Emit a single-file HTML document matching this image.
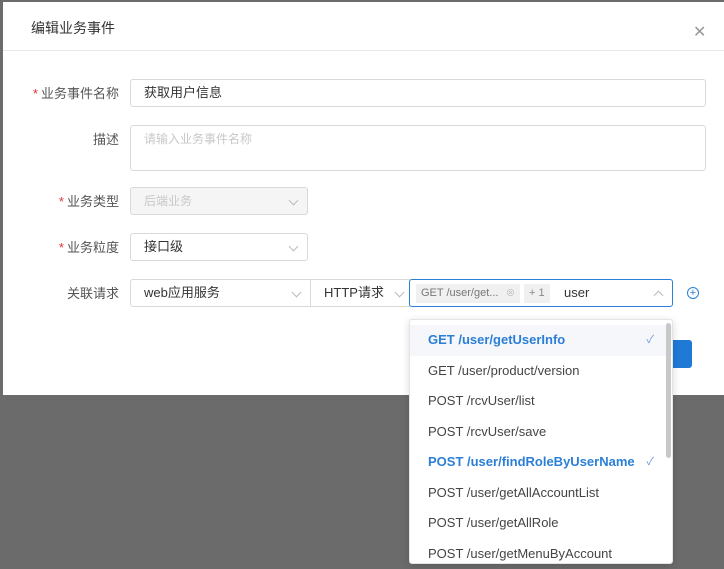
<!DOCTYPE html>
<html><head><meta charset="utf-8"><style>
*{box-sizing:border-box;margin:0;padding:0}
html,body{width:724px;height:559px}
body{background:#6b6b6b;position:relative;overflow:hidden;font-family:"Liberation Sans","Noto Sans CJK SC",sans-serif;font-size:13px;color:#333}
.dlg{position:absolute;left:3px;top:2px;width:721px;height:393px;background:#fff}
.hd{position:absolute;left:0;top:0;width:100%;height:49px;border-bottom:1px solid #e8e8e8}
.hd .t{position:absolute;left:28px;top:16px;font-size:14px;color:#333}
.x{position:absolute;left:690px;top:20px;color:#999;font-size:16px}
.lb{position:absolute;text-align:right;width:117px;left:0;font-size:13px;color:#555}
.lb i{color:#e0323b;font-style:normal;margin-right:3px}
.in{position:absolute;border:1px solid #d9d9d9;border-radius:3px;background:#fff;padding-left:13px;line-height:26px}
.ar{position:absolute;right:10px;top:9px;width:7px;height:7px;border-right:1px solid #bbb;border-bottom:1px solid #bbb;transform:rotate(45deg)}
.dd{position:absolute;left:409px;top:319px;width:264px;height:245px;background:#fff;border:1px solid #e4e4e4;border-radius:3px;box-shadow:0 2px 8px rgba(0,0,0,.15)}
.it{height:30.5px;line-height:30px;padding-left:18px;font-size:13px;color:#444;position:relative}
.it.s{color:#2b7fd6;font-weight:bold}
.it.s:after{content:"✓";position:absolute;right:18px;top:0;font-weight:normal;font-size:11px;color:#6a9fd8}
</style></head><body>
<div class="dlg">
<div class="hd"><div class="t">编辑业务事件</div><div class="x">✕</div></div>
</div>
<div class="lb" style="top:83px;left:2px"><i>*</i>业务事件名称</div>
<div class="in" style="left:130px;top:79px;width:576px;height:28px">获取用户信息</div>
<div class="lb" style="top:129px;left:2px">描述</div>
<div class="in" style="left:130px;top:125px;width:576px;height:46px;color:#c8c8c8;font-size:12px">请输入业务事件名称</div>
<div class="lb" style="top:191px;left:2px"><i>*</i>业务类型</div>
<div class="in" style="left:130px;top:187px;width:178px;height:28px;background:#f5f5f5;color:#c8c8c8;font-size:12px">后端业务<span class="ar"></span></div>
<div class="lb" style="top:237px;left:2px"><i>*</i>业务粒度</div>
<div class="in" style="left:130px;top:233px;width:178px;height:28px">接口级<span class="ar"></span></div>
<div class="lb" style="top:283px;left:2px">关联请求</div>
<div class="in" style="left:130px;top:279px;width:181px;height:28px;border-radius:3px 0 0 3px">web应用服务<span class="ar"></span></div>
<div class="in" style="left:310px;top:279px;width:100px;height:28px;border-radius:0">HTTP请求<span class="ar" style="right:6px"></span></div>
<div class="in" style="left:409px;top:279px;width:264px;height:28px;border-color:#2b7fd6;padding-left:6px">
<span style="position:absolute;left:6px;top:4px;height:19px;line-height:19px;background:#f0f0f0;color:#777;font-size:11px;padding:0 5px;width:104px">GET /user/get... <span style="color:#bbb;font-size:9px;position:absolute;right:5px">⊗</span></span>
<span style="position:absolute;left:114px;top:4px;height:19px;line-height:19px;background:#f0f0f0;color:#888;font-size:11px;padding:0 5px">+ 1</span>
<span style="position:absolute;left:154px;top:0;font-size:13px">user</span>
<span class="ar" style="transform:rotate(225deg);top:12px"></span></div>
<div style="position:absolute;left:687px;top:287px;width:12px;height:12px;border:1px solid #2b7fd6;border-radius:50%;color:#2b7fd6;font-size:11px;line-height:10px;text-align:center">+</div>
<div style="position:absolute;left:667px;top:340px;width:25px;height:28px;background:#1f7ad6;border-radius:3px"></div>
<div class="dd">
<div style="height:5px"></div>
<div class="it s" style="background:#f5f7fa">GET /user/getUserInfo</div>
<div class="it">GET /user/product/version</div>
<div class="it">POST /rcvUser/list</div>
<div class="it">POST /rcvUser/save</div>
<div class="it s">POST /user/findRoleByUserName</div>
<div class="it">POST /user/getAllAccountList</div>
<div class="it">POST /user/getAllRole</div>
<div class="it">POST /user/getMenuByAccount</div>
<div style="position:absolute;left:256px;top:3px;width:5px;height:135px;background:#c8c8c8;border-radius:3px"></div>
</div>
</body></html>
